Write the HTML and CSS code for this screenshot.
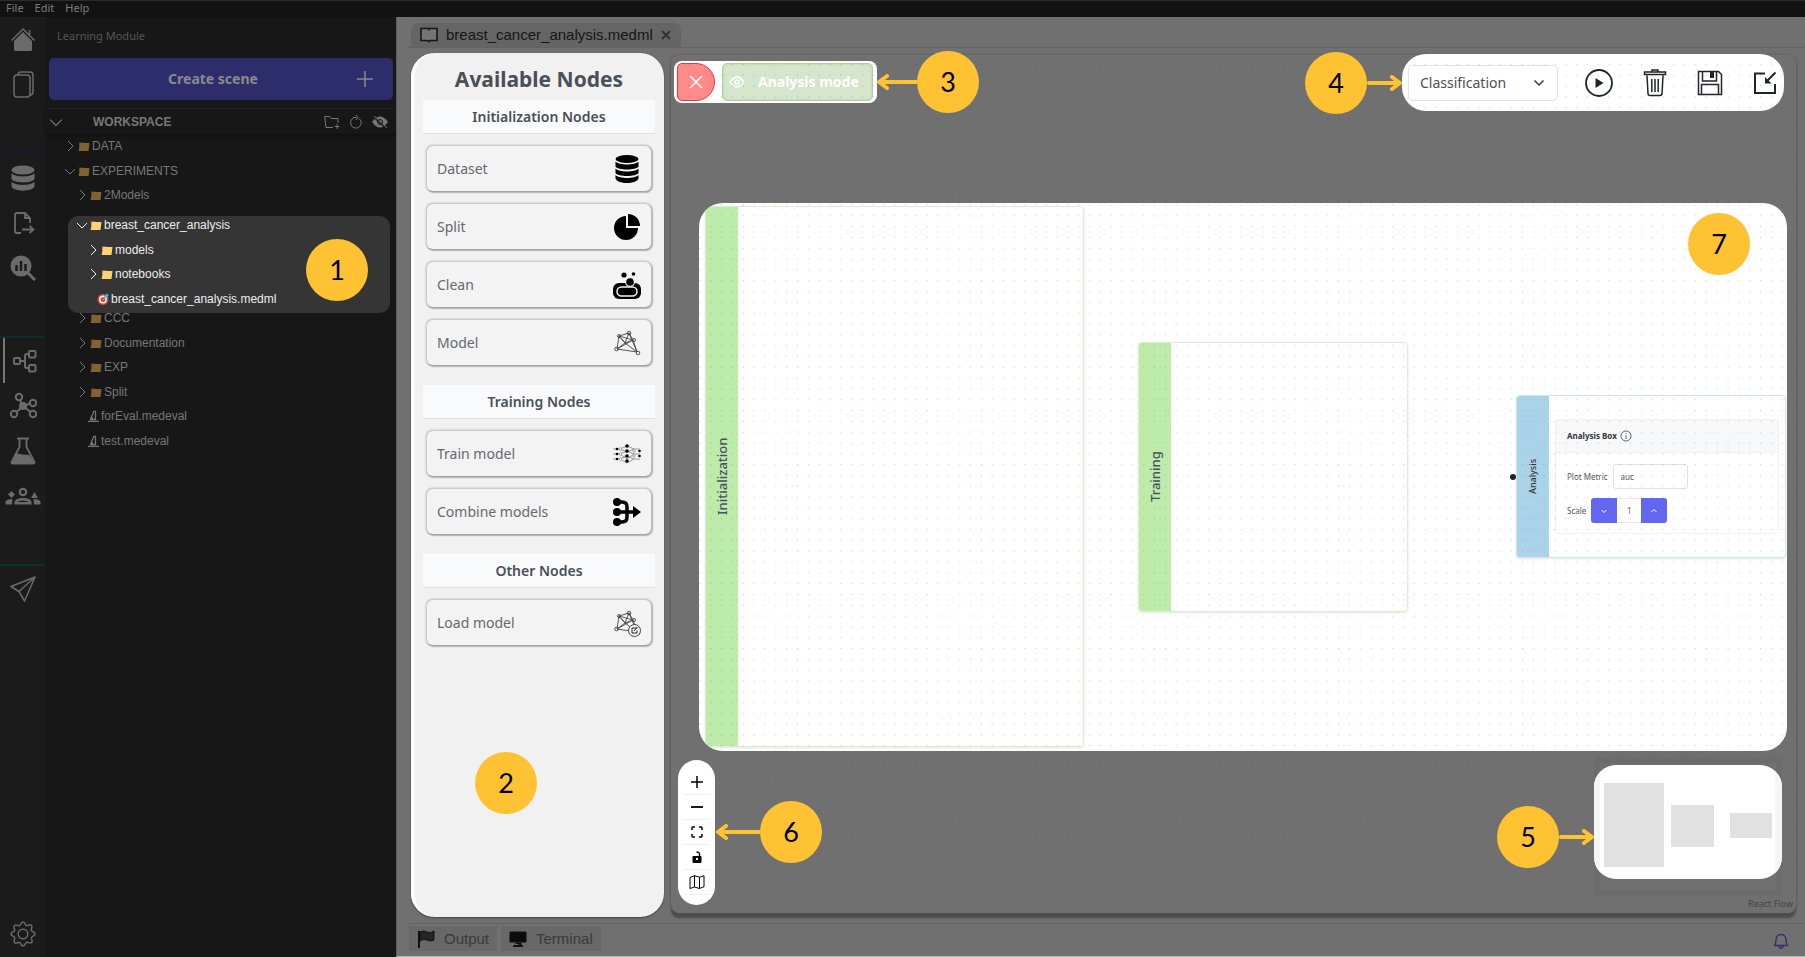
FILE: index.html
```html
<!DOCTYPE html>
<html lang="en">
<head>
<meta charset="utf-8">
<title>Learning Module</title>
<link rel="stylesheet" href="styles.css">
</head>
<body>
<svg class="defs" aria-hidden="true">
  <defs>
    <symbol id="folder" viewBox="0 0 12 12"><path d="M1 2.500h4l1 1h5v1.500h-9L1 10z" fill="currentColor" opacity=".7"/><path d="M2.500 3h9L10.500 11H.5z" fill="currentColor"/></symbol>
    <symbol id="chev-r" viewBox="0 0 12 12"><path d="M4 1l5 5-5 5" fill="none" stroke="currentColor"/></symbol>
    <symbol id="chev-d" viewBox="0 0 12 12"><path d="M1 4l5 5 5-5" fill="none" stroke="currentColor"/></symbol>
    <symbol id="scope" viewBox="0 0 12 12"><path d="M1 11.500h11M7 1l1.500.5V10M7 1L4 8h2M3 9.500h6" fill="none" stroke="currentColor" stroke-width="1.300"/></symbol>
    <symbol id="db" viewBox="0 0 24 28"><ellipse cx="12" cy="4" rx="11.500" ry="4"/><path d="M.5 6.500c3 4 20 4 23 0v5c-2 4-21 4-23 0zM.5 13.500c3 4 20 4 23 0v4.500c-2 4-21 4-23 0zM.5 20c3 4 20 4 23 0v3.500c-2 6-21 6-23 0z"/></symbol>
    <symbol id="db3" viewBox="0 0 24 26"><ellipse cx="12" cy="5" rx="11.500" ry="4.500"/><path d="M.5 8c3 4.500 20 4.500 23 0v6c-2 4.500-21 4.500-23 0zM.5 16.500c3 4.500 20 4.500 23 0v5c-2 5.500-21 5.500-23 0z"/></symbol>
    <symbol id="net" viewBox="0 0 28 28"><g fill="none" stroke="currentColor" stroke-width=".9"><path d="M6 7l10-3 4 7-8 3zM6 7L4 20l8-6 12 9L20 11 4 20l20 3L16 4l-4 10L6 7l14 4"/><circle cx="16" cy="4" r="1.800"/><circle cx="6" cy="7" r="1.500"/><circle cx="21" cy="11" r="1.500"/><circle cx="3.500" cy="20" r="1.800"/><circle cx="25" cy="24" r="1.800"/></g></symbol>
    <symbol id="arrow-l" viewBox="0 0 40 16"><path d="M40 8H2M10 2L2 8l8 6" fill="none" stroke="#ffc233" stroke-width="4" stroke-linecap="round" stroke-linejoin="round"/></symbol>
    <symbol id="arrow-r" viewBox="0 0 35 16"><path d="M2 8h31M25 2l8 6-8 6" fill="none" stroke="#ffc233" stroke-width="4" stroke-linecap="round" stroke-linejoin="round"/></symbol>
  </defs>
</svg>

<nav class="menubar"><button>File</button><button>Edit</button><button>Help</button></nav>

<div class="app">
  <nav class="rail">
    <div class="rail-group">
      <button aria-label="Home"><svg width="26" height="26" viewBox="0 0 26 26"><path d="M4 14l9-9 9 9v9q0 1-2 1H6q-2 0-2-1z" fill="currentColor"/><path d="M1.500 13.500L13 2l11.500 11.500M19.500 3v5" fill="none" stroke="currentColor" stroke-width="1.500"/></svg></button>
      <button aria-label="Files"><svg width="26" height="28" viewBox="0 0 26 28"><path d="M8 4q0-3 3-3h9q3 0 3 3v17q0 3-3 3" fill="none" stroke="currentColor" stroke-width="1.500"/><rect x="4" y="4" width="16" height="22" rx="3" fill="none" stroke="currentColor" stroke-width="1.500"/></svg></button>
    </div>
    <div class="rail-group blue">
      <button aria-label="Database"><svg width="24" height="26" fill="currentColor"><use href="#db3"/></svg></button>
      <button aria-label="Export"><svg width="24" height="24" viewBox="0 0 24 24"><path d="M10 22H6q-2 0-2-2V4q0-2 2-2h8l5 5v5M14 2v5h5M11 18.500h11M18.500 15l4 3.500-4 3.500" fill="none" stroke="currentColor" stroke-width="1.800"/></svg></button>
      <button aria-label="Explore"><svg width="26" height="26" viewBox="0 0 26 26"><circle cx="11" cy="11" r="10.500" fill="currentColor"/><path d="M18 18l7 7" stroke="currentColor" stroke-width="3"/><path d="M6.500 10v6M11 6v10M15.500 9v7" stroke="#1b1b1b" stroke-width="2.500"/></svg></button>
    </div>
    <div class="rail-group teal">
      <button class="active" aria-label="Learning"><svg width="26" height="26" viewBox="0 0 26 26"><g fill="none" stroke="currentColor" stroke-width="2"><rect x="3" y="10" width="6" height="6" rx="1"/><rect x="18" y="3" width="6.500" height="6.500" rx="1"/><rect x="18" y="17" width="6.500" height="6.500" rx="1"/><path d="M9 13h5M18 6h-2q-2 0-2 2v10q0 2 2 2h2"/></g></svg></button>
      <button aria-label="Hub"><svg width="28" height="28" viewBox="0 0 28 28"><circle cx="14" cy="14" r="4" fill="currentColor"/><g fill="none" stroke="currentColor" stroke-width="2"><circle cx="10" cy="5" r="3.200"/><circle cx="24" cy="11" r="3.200"/><circle cx="5" cy="22" r="3.200"/><circle cx="24" cy="22" r="3.200"/><path d="M11 8l3 6 7-2.500M7.500 20L14 14l7.500 6"/></g></svg></button>
      <button aria-label="Evaluation"><svg width="26" height="28" viewBox="0 0 26 28"><path d="M7 1.500h12M9.500 2v8L1.500 25q-.5 1.500 1 1.500h21q1.500 0 1-1.500L16.500 10V2" fill="none" stroke="currentColor" stroke-width="1.800"/><path d="M6 16q6 2 13 2l5.500 8h-23z" fill="currentColor"/></svg></button>
      <button aria-label="Application"><svg width="36" height="18" viewBox="0 0 36 18"><circle cx="18" cy="5" r="3.200" fill="none" stroke="currentColor" stroke-width="2.200"/><path d="M9.500 17.500v-2.500q1-4 8.500-4t8.500 4v2.500zM12 15h12q-6-3-12 0" fill="currentColor" fill-rule="evenodd"/><path d="M6.500 4l3.500 3.500L6.500 11 3 7.500zM29.500 5l3.500 6h-7zM.5 17.500v-3Q2 12 7.500 12L7 17.500zM35.500 17.500v-3Q34 12 28.500 12l.5 5.500z" fill="currentColor"/></svg></button>
    </div>
    <div class="rail-group green">
      <button aria-label="Send"><svg width="28" height="28" viewBox="0 0 28 28"><path d="M26 2L2 11.500l8 5 5.500 9.500zM26 2L10 16.500" fill="none" stroke="currentColor" stroke-width="1.500" stroke-linejoin="round"/></svg></button>
    </div>
    <div class="rail-group last">
      <button aria-label="Settings"><svg width="28" height="28" viewBox="0 0 28 28"><g fill="none" stroke="currentColor" stroke-width="1.500"><circle cx="14" cy="14" r="4.800"/><path d="M14 2c2 0 2 3 3.500 3.600S21 3.500 22.500 5.500s-1 3.500-.1 5S26 12 26 14s-3 2-3.600 3.500 2.100 3.500.1 5-3.500-1-5-.1S16 26 14 26s-2-3-3.500-3.600-3.500 2.100-5 .1 1-3.500.1-5S2 16 2 14s3-2 3.600-3.500-2.100-3.500-.1-5 3.500 1 5 .1S12 2 14 2z"/></g></svg></button>
    </div>
  </nav>

  <aside class="sidebar">
    <h1 class="module">Learning Module</h1>
    <button class="create"><span>Create scene</span><svg width="16" height="16" viewBox="0 0 16 16"><path d="M8 0v16M0 8h16" stroke="currentColor" stroke-width="1.500"/></svg></button>
    <header class="ws-head">
      <svg width="14" height="14"><use href="#chev-d"/></svg>
      <h2>WORKSPACE</h2>
      <button aria-label="New folder"><svg width="16" height="14" viewBox="0 0 16 14"><path d="M9 12.500H2L.7 1.500h5l1.500 2H14V8M13 9v5M10.500 11.500h5" fill="none" stroke="currentColor"/></svg></button>
      <button aria-label="Refresh"><svg width="14" height="14" viewBox="0 0 14 14"><path d="M10 3.500A5.300 5.300 0 1 1 4.500 3M4 2.500h3.500M7 0l2 2.500L7 5" fill="none" stroke="currentColor"/></svg></button>
      <button aria-label="Hide"><svg width="16" height="14" viewBox="0 0 16 14"><path d="M0 7q8-11 16 0-8 11-16 0z" fill="currentColor"/><path d="M1 1l13 12" stroke="#171717" stroke-width="2"/><path d="M2 1l13 12" stroke="currentColor"/><circle cx="8" cy="7" r="2.500" fill="none" stroke="#171717"/></svg></button>
    </header>
    <ul class="tree tree-top">
      <li class="l1"><svg><use href="#chev-r"/></svg><svg class="fold"><use href="#folder"/></svg>DATA</li>
      <li class="l1"><svg><use href="#chev-d"/></svg><svg class="fold"><use href="#folder"/></svg>EXPERIMENTS</li>
      <li class="l2"><svg><use href="#chev-r"/></svg><svg class="fold"><use href="#folder"/></svg>2Models</li>
    </ul>
    <div class="spot">
      <ul class="tree tree-mid">
        <li class="m1"><svg><use href="#chev-d"/></svg><svg class="fold"><use href="#folder"/></svg>breast_cancer_analysis</li>
        <li class="m2"><svg><use href="#chev-r"/></svg><svg class="fold"><use href="#folder"/></svg>models</li>
        <li class="m2"><svg><use href="#chev-r"/></svg><svg class="fold"><use href="#folder"/></svg>notebooks</li>
        <li class="m3"><svg viewBox="0 0 12 12"><circle cx="6" cy="6.500" r="5.500" fill="#e0402c"/><circle cx="6" cy="6.500" r="3.200" fill="none" stroke="#fff" stroke-width="1.400"/><path d="M6 6.500l3-4" stroke="#35b6ea" stroke-width="1.500"/><path d="M8 3l2-3 .5 1.500L12 2l-2 2.500z" fill="#35b6ea"/></svg>breast_cancer_analysis.medml</li>
      </ul>
      <span class="pin pin-1">1</span>
    </div>
    <ul class="tree tree-low">
      <li class="l2"><svg><use href="#chev-r"/></svg><svg class="fold"><use href="#folder"/></svg>CCC</li>
      <li class="l2"><svg><use href="#chev-r"/></svg><svg class="fold"><use href="#folder"/></svg>Documentation</li>
      <li class="l2"><svg><use href="#chev-r"/></svg><svg class="fold"><use href="#folder"/></svg>EXP</li>
      <li class="l2"><svg><use href="#chev-r"/></svg><svg class="fold"><use href="#folder"/></svg>Split</li>
      <li class="l3"><svg><use href="#scope"/></svg>forEval.medeval</li>
      <li class="l3"><svg><use href="#scope"/></svg>test.medeval</li>
    </ul>
  </aside>

  <main class="main">
    <div class="tabs">
      <div class="tab">
        <svg width="18" height="16" viewBox="0 0 18 16"><path d="M1 1.500h16v12H10.500L9 14.500l-1.500-1H1z" fill="#757575" stroke="currentColor" stroke-width="1.600"/><path d="M9 2v2" stroke="currentColor"/></svg>
        <span>breast_cancer_analysis.medml</span>
        <button aria-label="Close tab"><svg width="10" height="10" viewBox="0 0 10 10"><path d="M1 1l8 8M9 1l-8 8" stroke="#333" stroke-width="2"/></svg></button>
      </div>
    </div>

    <div class="work">
      <aside class="palette">
        <h2>Available Nodes</h2>
        <h3>Initialization Nodes</h3>
        <div class="nodes">
          <button>Dataset<svg viewBox="-2 0 28 28"><use href="#db" width="24" height="28"/></svg></button>
          <button>Split<svg viewBox="0 0 28 28"><path d="M13 3A12 12 0 1 0 25 15H13z"/><path d="M15 1a12 12 0 0 1 12 12H15z"/></svg></button>
          <button>Clean<svg viewBox="0 0 28 28"><rect y="12" width="28" height="16" rx="6"/><rect x="4" y="16" width="20" height="9" rx="4.500" fill="none" stroke="#f3f3f3" stroke-width="1.500"/><circle cx="17" cy="11" r="5" fill="#f3f3f3"/><circle cx="17" cy="11" r="3.800"/><circle cx="11" cy="4" r="2.600"/><circle cx="20.500" cy="3" r="1.800"/></svg></button>
          <button>Model<svg viewBox="0 0 28 28"><use href="#net"/></svg></button>
        </div>
        <h3>Training Nodes</h3>
        <div class="nodes">
          <button>Train model<svg viewBox="0 0 28 28"><path d="M0 9h4M0 14h4M0 19h4M4 9h3l7-3 7 3h6M4 14h3l7 5 7-5h6M4 19h3l7 4 7-4h6M7 9l7 3 7-3M7 14l7-3 7 3M7 19l7-3 7 3" fill="none" stroke="#777" stroke-width=".7"/><circle cx="14" cy="6" r="1.800"/><circle cx="14" cy="11" r="1.800"/><circle cx="14" cy="16" r="1.800"/><circle cx="14" cy="21" r="1.800"/><g><circle cx="4" cy="9" r="1.300"/><circle cx="4" cy="14" r="1.300"/><circle cx="4" cy="19" r="1.300"/><circle cx="26.500" cy="11" r="1.300"/><circle cx="26.500" cy="16" r="1.300"/></g><g fill="#fff" stroke="#777" stroke-width=".6"><circle cx="7.500" cy="9" r="1.300"/><circle cx="7.500" cy="14" r="1.300"/><circle cx="7.500" cy="19" r="1.300"/><circle cx="21" cy="11" r="1.300"/><circle cx="21" cy="16" r="1.300"/></g></svg></button>
          <button>Combine models<svg viewBox="0 0 28 28"><circle cx="4" cy="4" r="4"/><circle cx="4" cy="14" r="4"/><circle cx="4" cy="24" r="4"/><path d="M4 4h5q5 0 5 5v10q0 5-5 5H4M4 14h17" fill="none" stroke="#000" stroke-width="3.500"/><path d="M20 8l8 6-8 6z"/></svg></button>
        </div>
        <h3>Other Nodes</h3>
        <div class="nodes">
          <button>Load model<svg viewBox="0 0 28 28"><use href="#net"/><circle cx="21.500" cy="21.500" r="6" fill="#f3f3f3" stroke="#444"/><path d="M24 19h-5v5h5v-2.500M21 22l3.500-4" fill="none" stroke="#222"/></svg></button>
        </div>
        <span class="pin pin-2">2</span>
      </aside>

      <section class="canvas">
        <div class="stage">
          <div class="group init"><div class="bar">Initialization</div></div>
          <div class="group train"><div class="bar">Training</div></div>
          <div class="group analysis">
            <div class="bar">Analysis</div>
            <form class="box">
              <h4>Analysis Box <svg width="12" height="12" viewBox="0 0 12 12"><circle cx="6" cy="6" r="5" fill="none" stroke="#444" stroke-width=".8"/><path d="M6 5v4M6 3v1" stroke="#444" stroke-width=".8"/></svg></h4>
              <div class="field metric"><label for="metric">Plot Metric</label><input id="metric" type="text" value="auc"></div>
              <div class="field scale"><label for="scale">Scale</label>
                <div class="stepper"><button type="button" aria-label="Decrease"><svg width="6" height="6" viewBox="0 0 12 12"><path d="M1 4l5 5 5-5" fill="none" stroke="currentColor" stroke-width="2"/></svg></button><input id="scale" type="text" value="1"><button type="button" aria-label="Increase"><svg width="6" height="6" viewBox="0 0 12 12"><path d="M1 8l5-5 5 5" fill="none" stroke="currentColor" stroke-width="2"/></svg></button></div>
              </div>
            </form>
            <span class="handle"></span>
          </div>
          <span class="pin pin-7">7</span>
        </div>

        <div class="mode">
          <button class="close" aria-label="Close"><svg width="14" height="14" viewBox="0 0 14 14"><path d="M1 1l12 12M13 1L1 13" stroke="#fff" stroke-width="1.500"/></svg></button>
          <button class="analyse"><svg width="16" height="12" viewBox="0 0 16 12"><path d="M1 6q7-10 14 0-7 10-14 0z" fill="none" stroke="#fff" stroke-width="1.300"/><circle cx="8" cy="6" r="2.200" fill="none" stroke="#fff" stroke-width="1.300"/></svg>Analysis mode</button>
        </div>
        <div class="callout c3"><svg width="40" height="16"><use href="#arrow-l"/></svg><span class="pin">3</span></div>

        <div class="callout c4"><span class="pin">4</span><svg width="35" height="16"><use href="#arrow-r"/></svg></div>
        <div class="toolbar">
          <div class="picker"><select aria-label="Task type"><option>Classification</option><option>Regression</option></select><svg width="12" height="12" viewBox="0 0 12 12"><path d="M1.500 3.500L6 8l4.500-4.500" fill="none" stroke="#343a40" stroke-width="1.500"/></svg></div>
          <button aria-label="Run"><svg width="28" height="28" viewBox="0 0 28 28"><circle cx="14" cy="14" r="13" fill="none" stroke="currentColor" stroke-width="1.800"/><path d="M10.500 9v10l8-5z" fill="currentColor"/></svg></button>
          <button aria-label="Delete"><svg width="24" height="28" viewBox="0 0 24 28"><path d="M9 2.500V1h6v1.500M1.500 3h21v2.500h-21zM4 6.500l1 18q0 2 2 2h10q2 0 2-2l1-18M8.800 10v13M12 10v13M15.200 10v13" fill="none" stroke="currentColor" stroke-width="1.500"/></svg></button>
          <button aria-label="Save"><svg width="26" height="26" viewBox="0 0 26 26"><path d="M1.500 1.500h20l3 3v20h-23zM5.500 1.500V11h14V1.500M4.500 24V14.500h17V24" fill="none" stroke="currentColor" stroke-width="1.500"/><path d="M13 2h4v6h-4z" fill="currentColor"/></svg></button>
          <button aria-label="Import"><svg width="24" height="24" viewBox="0 0 24 24"><path d="M12 2.500H2V22h20V13M22.500 1.500l-9 9" fill="none" stroke="currentColor" stroke-width="2"/><path d="M12 6v6.500h6.500z" fill="currentColor"/></svg></button>
        </div>

        <svg class="dots" aria-hidden="true"><defs><pattern id="grid" x="2.100" y="3.900" width="10.820" height="10.820" patternUnits="userSpaceOnUse"><circle cx="5.400" cy="5.400" r=".6" fill="#000" fill-opacity=".24"/></pattern></defs><rect width="100%" height="100%" fill="url(#grid)"/></svg>

        <div class="controls">
          <button aria-label="Zoom in"><svg viewBox="0 0 12 12"><path d="M6 0v12M0 6h12" stroke="currentColor" stroke-width="1.500"/></svg></button>
          <button aria-label="Zoom out"><svg viewBox="0 0 12 12"><path d="M0 6h12" stroke="currentColor" stroke-width="1.800"/></svg></button>
          <button aria-label="Fit view"><svg viewBox="0 0 12 12"><path d="M1 4V2q0-1 1-1h2M8 1h2q1 0 1 1v2M11 8v2q0 1-1 1H8M4 11H2q-1 0-1-1V8" fill="none" stroke="currentColor" stroke-width="1.500"/></svg></button>
          <button aria-label="Lock"><svg viewBox="0 0 12 12"><rect x="1.500" y="5" width="9" height="7" rx="1"/><path d="M8.500 5V3q0-2-3-2" fill="none" stroke="currentColor" stroke-width="1.400"/><circle cx="6" cy="8" r="1.200" fill="#fff"/></svg></button>
          <button aria-label="Map"><svg class="wide" viewBox="0 0 16 14"><path d="M1 2.500L5.500.7l5 1.500L15 .7v11L10.500 13.500l-5-1.500L1 13.500zM5.500.7V12M10.500 2.200v11" fill="none" stroke="currentColor"/></svg></button>
        </div>
        <div class="callout c6"><svg width="44" height="16" viewBox="0 0 44 16"><path d="M44 8H2M10 2L2 8l8 6" fill="none" stroke="#ffc233" stroke-width="4" stroke-linecap="round" stroke-linejoin="round"/></svg><span class="pin">6</span></div>

        <div class="map-mask"></div>
        <div class="callout c5"><span class="pin">5</span><svg width="35" height="16"><use href="#arrow-r"/></svg></div>
        <div class="minimap"><svg width="188" height="114" viewBox="0 0 188 114"><path d="M0 0h6v114H0zM181 0h7v114h-7z" fill="#f5f5f5"/><g fill="#e1e1e1"><path d="M10 18h60v84H10zM77 40h43v42H77zM136 48h42v25h-42z"/></g></svg></div>
        <a class="credit" href="#flow">React Flow</a>
      </section>
    </div>

    <footer class="dock">
      <button><svg width="18" height="18" viewBox="0 0 18 18"><path d="M2 1v17" stroke="#111" stroke-width="2"/><path d="M3 2q4-2 7 0t7-1v9q-4 2-7 0t-7 1z" fill="#262626" stroke="#111"/></svg>Output</button>
      <button><svg width="18" height="16" viewBox="0 0 18 16"><path d="M1 1h16v10H1zM6 12h6v2.500H4.500v1h9v-1H12" fill="#0b0b0b" stroke="#111"/></svg>Terminal</button>
      <button class="bell" aria-label="Notifications"><svg width="16" height="16" viewBox="0 0 16 16"><path d="M1 12.500q2-1 2-6 .5-5 5-5t5 5q0 5 2 6zM6 13q0 2 2 2t2-2" fill="none" stroke="currentColor" stroke-width="1.300"/></svg></button>
    </footer>
  </main>
</div>
</body>
</html>
```
FILE: styles.css
```css
* { box-sizing: border-box; }
body { margin: 0; height: 100vh; display: flex; flex-direction: column; overflow: hidden; background: #171717; font-family: "Noto Sans", "Open Sans", sans-serif; }
button, input, select { font: inherit; color: inherit; margin: 0; padding: 0; border: 0; background: none; }
h1, h2, h3, h4, ul { margin: 0; padding: 0; }
svg { flex: none; display: block; }
.defs { position: absolute; width: 0; height: 0; }

.menubar { flex: none; height: 17px; border-top: 1px solid #2b2b2b; background: #121213; display: flex; align-items: center; gap: 11px; padding: 0 0 2px 6px; color: #7d7d7d; font-size: 11px; line-height: 14px; }
.app { flex: 1; min-height: 0; display: flex; }

.rail { width: 45px; flex: none; background: #1b1b1b; color: #6b6b6b; display: flex; flex-direction: column; }
.rail-group { padding-bottom: 46px; display: flex; flex-direction: column; }
.rail-group button { height: 45px; display: flex; align-items: center; justify-content: center; }
.rail-group button.active { border-left: 2px solid #777; margin-left: 3px; padding-right: 3px; }
.blue { border-top: 2px solid #101d33; }
.teal { border-top: 2px solid #0c302e; }
.green { border-top: 2px solid #0a3224; }
.last { margin-top: auto; padding-bottom: 1px; }

.sidebar { width: 351px; flex: none; background: #171717; color: #777; font-family: "Liberation Sans", Arial, sans-serif; }
.module { padding: 11px 0 0 12px; font: 400 11px/16px "Noto Sans", sans-serif; color: #565656; }
.create { display: flex; align-items: center; width: 344px; height: 42px; margin: 14px 4px 8px; padding: 0 20px; border-radius: 5px; background: #2d2d6c; color: #8a8a8a; font: 700 14px/20px "Noto Sans", sans-serif; }
.create span { flex: 1; text-align: center; }
.ws-head { display: flex; align-items: center; gap: 9px; height: 26px; padding: 0 8px 0 4px; border-top: 1px solid #202020; box-shadow: 0 2px 2px #111; }
.ws-head h2 { flex: 1; padding-left: 21px; font-size: 12px; line-height: 16px; font-weight: 600; }
.tree { list-style: none; display: flex; flex-direction: column; justify-content: space-between; font-size: 12px; line-height: 18px; }
.tree li { display: flex; align-items: center; gap: 2px; height: 18px; }
.tree svg { width: 12px; height: 12px; }
.tree .fold { color: #806330; }
.tree-top { height: 67px; margin-top: 3px; }
.tree-low { height: 141px; margin-top: -4px; }
.l1 { padding-left: 19px; }
.l2 { padding-left: 31px; }
.l3 { padding-left: 42px; }
.spot { position: relative; z-index: 1; margin: 12px 6px 0 23px; height: 97px; border-radius: 10px; background: #353535; color: #eee; }
.tree-mid { height: 92px; }
.tree-mid .fold { color: #ffd271; }
.m1 { padding-left: 8px; }
.m2 { padding-left: 19px; }
.m3 { padding-left: 29px; }

.pin { display: flex; align-items: center; justify-content: center; width: 62px; height: 62px; border-radius: 50%; background: #ffc233; color: #000; font: 400 27px/32px Lato, sans-serif; }
.pin-1 { position: absolute; right: 22px; top: 23px; }
.pin-2 { position: absolute; left: 64px; bottom: 103px; }
.pin-7 { position: absolute; right: 37px; top: 10px; z-index: 3; }

.main { flex: 1; min-width: 0; display: flex; flex-direction: column; border-left: 1px solid #5c5c5c; border-bottom: 1px solid #b5b5b5; background: #707070; }
.tabs { flex: none; height: 31px; margin-left: 10px; padding: 6px 4px 0; border-bottom: 1px solid #636363; display: flex; }
.tab { display: flex; align-items: center; padding: 0 10px 0 9px; border-radius: 7px 7px 0 0; background: #656565; color: #161616; font: 15px/20px "Liberation Sans", Arial, sans-serif; gap: 8px; }

.work { flex: 1; min-height: 0; display: flex; gap: 7px; padding: 5px 9px 6px 14px; }
.palette { position: relative; width: 253px; flex: none; padding: 11px 9px 0 12px; border-radius: 24px; background: #f1f1f1; box-shadow: inset 4px 0 2px -1px #fff, 0 1px 2px #444; color: #495057; }
.palette h2 { font-size: 21px; line-height: 30px; text-align: center; margin-bottom: 6px; }
.palette h3 { height: 34px; border-bottom: 1px solid #dee2e6; background: #f8fafc; font-size: 14px; line-height: 34px; font-weight: 600; text-align: center; }
.nodes { display: grid; gap: 11px; padding: 11px 3px 19px; }
.nodes button { display: flex; align-items: center; justify-content: space-between; height: 47px; padding: 0 10px; border: 1px solid #ccc; border-right-color: #bbb; border-bottom-color: #a5a5a5; border-radius: 7px; background: #f3f3f3; box-shadow: 0 0 2px #aaa, 1px 1px 1px #bbb; color: #64696f; font-size: 14px; line-height: 20px; }
.nodes svg { width: 28px; height: 28px; color: #444; }

.canvas { position: relative; flex: 1; min-width: 0; margin: 2px 0 4px; border-radius: 8px; background: #707070; box-shadow: 0 0 3px #555, 0 5px 2px #4c4c4c; }
.dots { position: absolute; inset: 0; width: 100%; height: 100%; pointer-events: none; }
.stage { position: absolute; left: 28px; right: 9px; top: 148px; bottom: 162px; border-radius: 24px; background: #fff; overflow: hidden; }
.group { position: absolute; display: flex; border: 1px solid #d9efd0; border-radius: 4px; box-shadow: 0 1px 3px #e4e4e4; color: #495066; }
.bar { width: 32px; flex: none; display: flex; align-items: center; justify-content: center; writing-mode: vertical-rl; rotate: 180deg; background: #bdebaa; font-size: 13px; line-height: 16px; font-weight: 500; border-radius: 0 3px 3px 0; }
.init { left: 6px; top: 3px; width: 379px; height: 541px; }
.train { left: 439px; top: 139px; width: 270px; height: 270px; }
.analysis { left: 817px; top: 192px; width: 270px; height: 163px; border-color: #cfe5f0; background: #fff; }
.analysis .bar { background: #aad3e9; font-size: 9px; line-height: 12px; color: #333; }
.handle { position: absolute; left: -7px; top: 78px; width: 6px; height: 6px; border-radius: 50%; background: #222; }
.box { flex: 1; margin: 23px 6px; border: 1px solid #eff1f3; border-radius: 3px; font-size: 8px; line-height: 12px; color: #555; }
.box h4 { display: flex; align-items: center; gap: 3px; height: 33px; padding-left: 11px; border-bottom: 1px solid #eff1f3; background: #f7f8fa; font-size: 8px; color: #333; }
.field { display: flex; align-items: center; gap: 5px; padding-left: 11px; }
.metric { padding-top: 11px; }
.metric input { width: 75px; height: 25px; padding: 0 7px; border: 1px solid #dee2e6; border-radius: 3px; }
.scale { padding-top: 9px; }
.stepper { display: flex; }
.stepper button { width: 26px; height: 25px; display: flex; align-items: center; justify-content: center; background: #6366f1; color: #fff; border-radius: 3px 0 0 3px; }
.stepper button:last-child { border-radius: 0 3px 3px 0; }
.stepper input { width: 24px; height: 25px; text-align: center; border: 1px solid #e3e6ea; border-width: 1px 0; color: #864; }

.mode { position: absolute; left: 3px; top: 6px; display: flex; gap: 7px; padding: 2px 4px 2px 3px; border-radius: 8px; background: #fff; }
.mode button { height: 38px; display: flex; align-items: center; justify-content: center; }
.close { width: 38px; border: 1px solid #e23c3c; border-radius: 5px 19px 19px 5px; background: #ff8a8a; }
.mode .analyse { width: 151px; justify-content: flex-start; padding-left: 6px; gap: 13px; border: 1px solid #add09d; border-radius: 5px; background: #d6e6cd; box-shadow: inset 0 0 3px #b3d1a5; color: #fff; font-size: 14px; line-height: 20px; font-weight: 700; }

.callout { position: absolute; z-index: 2; display: flex; align-items: center; }
.c3 { left: 206px; top: -4px; }
.c4 { right: 394px; top: -3px; }
.c5 { right: 202px; bottom: 45px; }
.c6 { left: 45px; bottom: 50px; }

.toolbar { position: absolute; right: 12px; top: -1px; height: 57px; width: 382px; display: flex; align-items: center; justify-content: space-between; padding: 0 5px 0 6px; border-radius: 24px; background: #fff; color: #212529; }
.toolbar > button { width: 28px; display: flex; justify-content: center; }
.picker { position: relative; width: 150px; height: 36px; z-index: 2; }
.picker select { width: 100%; height: 100%; padding: 0 11px; appearance: none; border: 1px solid #dee2e6; border-radius: 5px; background: #fff; color: #495057; font-size: 14px; }
.picker svg { position: absolute; right: 13px; top: 12px; pointer-events: none; }

.controls { position: absolute; left: 7px; bottom: 8px; width: 37px; padding: 10px 6px; border-radius: 19px; background: #fff; }
.controls button { width: 100%; height: 25px; display: flex; align-items: center; justify-content: center; border-bottom: 1px solid #eee; }
.controls svg { width: 12px; height: 12px; }
.controls .wide { width: 16px; height: 14px; }

.map-mask { position: absolute; right: 14px; bottom: 17px; width: 188px; height: 139px; border: 6px solid #6b6b6b; background: #707070; }
.minimap { position: absolute; right: 14px; bottom: 34px; border-radius: 22px; background: #fff; overflow: hidden; }
.credit { position: absolute; right: 3px; bottom: 3px; color: #444; font-size: 9px; line-height: 12px; text-decoration: none; }

.dock { flex: none; height: 33px; margin-left: 10px; padding: 2px 2px 5px; border-top: 1px solid #626262; display: flex; gap: 4px; font: 15px/20px "Liberation Sans", Arial, sans-serif; color: #3a3a3a; }
.dock button { display: flex; align-items: center; gap: 9px; padding: 0 8px; background: #686868; }
.dock .bell { margin-left: auto; padding: 4px 14px 0; background: none; color: #30306f; }
```
